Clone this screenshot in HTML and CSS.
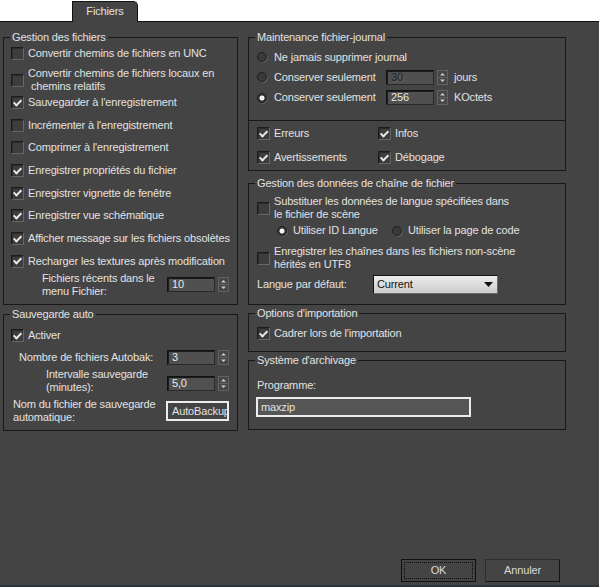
FILE: index.html
```html
<!DOCTYPE html>
<html lang="fr">
<head>
<meta charset="UTF-8">
<title>Préférences - Fichiers</title>
<link rel="stylesheet" href="styles.css">
</head>
<body>

<div class="tabbar">
  <div class="tab">Fichiers</div>
</div>

<div class="panel">
  <div class="cols">

    <!-- colonne gauche -->
    <div class="col col-left">

      <fieldset class="grp">
        <legend>Gestion des fichiers</legend>
        <div class="body body-files">
          <label class="chk"><span class="box"></span>Convertir chemins de fichiers en UNC</label>
          <label class="chk mt7"><span class="box"></span><span>Convertir chemins de fichiers locaux en<br><span class="indent">chemins relatifs</span></span></label>
          <label class="chk mt3"><span class="box on"></span>Sauvegarder à l'enregistrement</label>
          <label class="chk mt10"><span class="box"></span>Incrémenter à l'enregistrement</label>
          <label class="chk mt10"><span class="box"></span>Comprimer à l'enregistrement</label>
          <label class="chk mt10"><span class="box on"></span>Enregistrer propriétés du fichier</label>
          <label class="chk mt10"><span class="box on"></span>Enregistrer vignette de fenêtre</label>
          <label class="chk mt10"><span class="box on"></span>Enregistrer vue schématique</label>
          <label class="chk mt10"><span class="box on"></span>Afficher message sur les fichiers obsolètes</label>
          <label class="chk mt10"><span class="box on"></span>Recharger les textures après modification</label>
          <div class="field mt4">
            <span class="lbl lbl-recent">Fichiers récents dans le<br>menu Fichier:</span>
            <div class="spin">
              <span class="spin-in">10</span>
              <svg class="spin-btn" width="11" height="15" viewBox="0 0 11 15"><rect x="0.5" y="0.5" width="10" height="14" fill="#464646" stroke="#626262"/><line x1="1" y1="7.5" x2="10" y2="7.5" stroke="#626262"/><path d="M3 5.5h5L5.5 3z" fill="#cfcfcf"/><path d="M3 9.5h5L5.5 12z" fill="#cfcfcf"/></svg>
            </div>
          </div>
        </div>
      </fieldset>

      <fieldset class="grp mt3">
        <legend>Sauvegarde auto</legend>
        <div class="body body-auto">
          <label class="chk"><span class="box on"></span>Activer</label>
          <div class="field mt8">
            <span class="lbl lbl-nb">Nombre de fichiers Autobak:</span>
            <div class="spin">
              <span class="spin-in">3</span>
              <svg class="spin-btn" width="11" height="15" viewBox="0 0 11 15"><rect x="0.5" y="0.5" width="10" height="14" fill="#464646" stroke="#626262"/><line x1="1" y1="7.5" x2="10" y2="7.5" stroke="#626262"/><path d="M3 5.5h5L5.5 3z" fill="#cfcfcf"/><path d="M3 9.5h5L5.5 12z" fill="#cfcfcf"/></svg>
            </div>
          </div>
          <div class="field mt2">
            <span class="lbl lbl-int">Intervalle sauvegarde<br>(minutes):</span>
            <div class="spin spin-low">
              <span class="spin-in">5,0</span>
              <svg class="spin-btn" width="11" height="15" viewBox="0 0 11 15"><rect x="0.5" y="0.5" width="10" height="14" fill="#464646" stroke="#626262"/><line x1="1" y1="7.5" x2="10" y2="7.5" stroke="#626262"/><path d="M3 5.5h5L5.5 3z" fill="#cfcfcf"/><path d="M3 9.5h5L5.5 12z" fill="#cfcfcf"/></svg>
            </div>
          </div>
          <div class="field mt4">
            <span class="lbl lbl-nom">Nom du fichier de sauvegarde<br>automatique:</span>
            <span class="text-in text-auto">AutoBackup</span>
          </div>
        </div>
      </fieldset>

    </div>

    <!-- colonne droite -->
    <div class="col col-right">

      <fieldset class="grp">
        <legend>Maintenance fichier-journal</legend>
        <div class="body body-maint">
          <div class="opt"><span class="radio"></span>Ne jamais supprimer journal</div>
          <div class="optrow mt6">
            <div class="opt opt-fixed"><span class="radio"></span>Conserver seulement</div>
            <div class="spin">
              <span class="spin-in off">30</span>
              <svg class="spin-btn" width="11" height="15" viewBox="0 0 11 15"><rect x="0.5" y="0.5" width="10" height="14" fill="#464646" stroke="#626262"/><line x1="1" y1="7.5" x2="10" y2="7.5" stroke="#626262"/><path d="M3 5.5h5L5.5 3z" fill="#cfcfcf"/><path d="M3 9.5h5L5.5 12z" fill="#cfcfcf"/></svg>
            </div>
            <span class="unit">jours</span>
          </div>
          <div class="optrow mt5">
            <div class="opt opt-fixed"><span class="radio on"></span>Conserver seulement</div>
            <div class="spin">
              <span class="spin-in">256</span>
              <svg class="spin-btn" width="11" height="15" viewBox="0 0 11 15"><rect x="0.5" y="0.5" width="10" height="14" fill="#464646" stroke="#626262"/><line x1="1" y1="7.5" x2="10" y2="7.5" stroke="#626262"/><path d="M3 5.5h5L5.5 3z" fill="#cfcfcf"/><path d="M3 9.5h5L5.5 12z" fill="#cfcfcf"/></svg>
            </div>
            <span class="unit">KOctets</span>
          </div>
        </div>
        <div class="body body-levels">
          <label class="chk"><span class="box on"></span>Erreurs</label>
          <label class="chk"><span class="box on"></span>Infos</label>
          <label class="chk"><span class="box on"></span>Avertissements</label>
          <label class="chk"><span class="box on"></span>Débogage</label>
        </div>
      </fieldset>

      <fieldset class="grp mt6">
        <legend>Gestion des données de chaîne de fichier</legend>
        <div class="body body-str">
          <label class="chk"><span class="box"></span><span>Substituer les données de langue spécifiées dans<br>le fichier de scène</span></label>
          <div class="optrow optrow-sub mt3">
            <div class="opt opt-id"><span class="radio on"></span>Utiliser ID Langue</div>
            <div class="opt"><span class="radio"></span>Utiliser la page de code</div>
          </div>
          <label class="chk mt8"><span class="box"></span><span>Enregistrer les chaînes dans les fichiers non-scène<br>hérités en UTF8</span></label>
          <div class="optrow mt4">
            <span class="lbl-lang">Langue par défaut:</span>
            <div class="combo">
              <span>Current</span>
              <svg width="9" height="5" viewBox="0 0 9 5"><path d="M0 0h9L4.5 5z" fill="#111"/></svg>
            </div>
          </div>
        </div>
      </fieldset>

      <fieldset class="grp mt2">
        <legend>Options d'importation</legend>
        <div class="body body-imp">
          <label class="chk"><span class="box on"></span>Cadrer lors de l'importation</label>
        </div>
      </fieldset>

      <fieldset class="grp mt2">
        <legend>Système d'archivage</legend>
        <div class="body body-arch">
          <div>Programme:</div>
          <span class="text-in text-prog">maxzip</span>
        </div>
      </fieldset>

    </div>
  </div>

  <div class="actions">
    <button class="btn btn-default">OK</button>
    <button class="btn">Annuler</button>
  </div>
</div>

<div class="edge"></div>

</body>
</html>
```

FILE: styles.css
```css
body {
  margin: 0;
  background: #fff;
  font-family: "Liberation Sans", Arial, sans-serif;
  font-size: 11px;
  line-height: 13px;
  letter-spacing: -0.15px;
  color: #e2e2e2;
}

/* Onglet */
.tabbar {
  height: 21px;
  border-bottom: 1px solid #121212;
  padding-left: 72px;
  display: flex;
  align-items: flex-end;
}

.tab {
  width: 64px;
  height: 20px;
  margin-bottom: -1px;
  background: #444;
  border: 1px solid #121212;
  border-bottom: none;
  border-top-right-radius: 5px;
  text-align: center;
  line-height: 19px;
}

.panel {
  background: #444;
  height: 563px;
  box-sizing: border-box;
  padding: 9px 0 3px 3px;
  display: flex;
  flex-direction: column;
}

.cols {
  display: flex;
  gap: 10px;
  align-items: flex-start;
}

.col {
  display: flex;
  flex-direction: column;
}

.col-left { width: 235px; }
.col-right { width: 318px; }

/* Groupes */
.grp {
  margin: 0;
  padding: 0;
  border: 1px solid #181818;
  min-width: 0;
}

.grp legend {
  padding: 0 2px;
  margin-left: 6px;
  line-height: 13px;
}

.body { display: flex; flex-direction: column; }

.body-files { padding: 3px 8px 6px 7px; }
.body-auto { padding: 8.5px 8px 6px 7px; }
.body-maint { padding: 6.5px 8px 14.5px 8px; }
.body-levels {
  display: grid;
  grid-template-columns: 121px auto;
  row-gap: 11px;
  padding: 6.5px 8px 5.5px 8px;
  border-top: 1px solid #181818;
}
.body-str { padding: 5.5px 8px 9.5px 8px; }
.body-imp { padding: 7px 8px 10.5px 8px; }
.body-arch { padding: 12px 8px 12px 8px; }

.mt2 { margin-top: 2.5px; }
.mt3 { margin-top: 3px; }
.mt4 { margin-top: 4px; }
.mt5 { margin-top: 5.5px; }
.mt6 { margin-top: 6px; }
.mt7 { margin-top: 7px; }
.mt8 { margin-top: 8px; }
.mt10 { margin-top: 9.7px; }

/* Cases à cocher */
.chk {
  display: flex;
  align-items: center;
  gap: 4px;
  white-space: nowrap;
}

.indent { padding-left: 3px; }

.box {
  flex: none;
  width: 13px;
  height: 13px;
  box-sizing: border-box;
  background: #3d3d3d;
  border: 1px solid;
  border-color: #1c1c1c #666 #666 #1c1c1c;
  box-shadow: inset 1px 1px 0 #2c2c2c;
  display: flex;
  align-items: center;
  justify-content: center;
}

.box.on::after {
  content: "";
  width: 3px;
  height: 6px;
  border: solid #ececec;
  border-width: 0 2px 2px 0;
  transform: translate(0, -1px) rotate(45deg);
}

/* Boutons radio */
.opt {
  display: flex;
  align-items: center;
  gap: 7px;
  white-space: nowrap;
}

.radio {
  flex: none;
  width: 10px;
  height: 10px;
  box-sizing: border-box;
  border-radius: 50%;
  border: 1px solid #1e1e1e;
  background: #3a3a3a;
  box-shadow: 1px 1px 0 #5c5c5c;
}

.radio.on {
  background: radial-gradient(circle, #f2f2f2 0 2.2px, #3a3a3a 2.8px);
}

.optrow {
  display: flex;
  align-items: center;
}

.opt-fixed { width: 129px; }
.unit { margin-left: 6px; }

.optrow-sub { padding-left: 20px; }
.optrow-sub .opt { gap: 6px; }
.opt-id { width: 115px; }

/* Champs */
.field {
  display: flex;
  align-items: center;
}

.lbl { white-space: nowrap; }
.lbl-recent { padding-left: 31px; }
.lbl-nb { padding-left: 8px; }
.lbl-int { padding-left: 35px; }
.lbl-nom { padding-left: 2px; }

.spin {
  display: flex;
  gap: 3px;
  flex: none;
}

.field .spin,
.field .text-in { margin-left: auto; }

.spin-low { margin-top: 5px; }

.spin-in {
  width: 48px;
  height: 15px;
  box-sizing: border-box;
  background: #505050;
  border: 1px solid;
  border-color: #121212 #2a2a2a #2a2a2a #121212;
  box-shadow: inset 1px 1px 0 #1c1c1c;
  padding-left: 4px;
  line-height: 13px;
  color: #e8e8e8;
}

.spin-in.off {
  color: #242424;
  text-shadow: 1px 1px 0 #5e5e5e;
}

.spin-btn { display: block; }

.text-in {
  height: 20px;
  box-sizing: border-box;
  border: 2px solid #ececec;
  line-height: 16px;
  overflow: hidden;
  white-space: nowrap;
}

.text-auto {
  width: 63px;
  background: #444;
  padding-left: 4px;
}

.text-prog {
  width: 215px;
  margin-top: 4.5px;
  background: #555;
  padding-left: 3px;
  margin-left: -1px;
}

.lbl-lang { width: 116px; }

.combo {
  width: 125px;
  height: 19px;
  box-sizing: border-box;
  border: 1px solid;
  border-color: #101010 #6a6a6a #6a6a6a #101010;
  background: linear-gradient(#ececec, #cdcdcd);
  color: #111;
  display: flex;
  align-items: center;
  justify-content: space-between;
  padding: 0 4px 0 3px;
}

/* Boutons */
.actions {
  margin-top: auto;
  display: flex;
  justify-content: flex-end;
  gap: 9px;
  padding-right: 39px;
}

.btn {
  width: 75px;
  height: 23px;
  background: #444;
  color: #d8d8d8;
  font: inherit;
  letter-spacing: inherit;
  border: 1px solid;
  border-color: #2e2e2e #141414 #141414 #2e2e2e;
  padding: 0;
}

.btn-default {
  border-color: #101010;
  outline: 1px dotted #0c0c0c;
  outline-offset: -4px;
}

.edge {
  height: 2px;
  background: #2e353a;
}
```
